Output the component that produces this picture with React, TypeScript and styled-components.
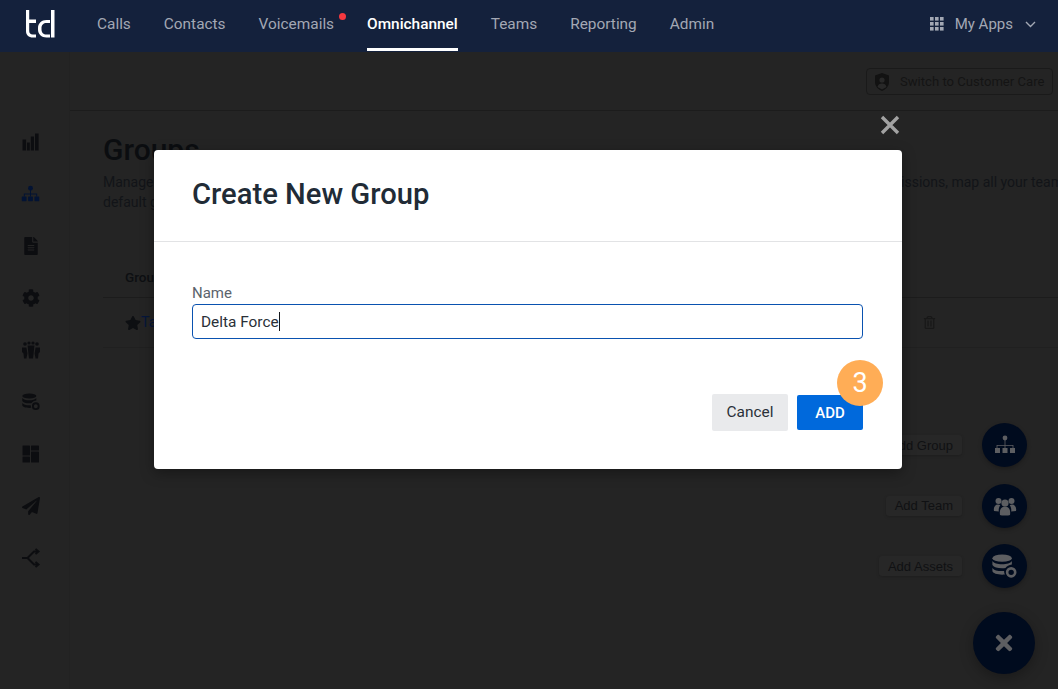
import React from "react";
import styled, { createGlobalStyle } from "styled-components";
import { FaStar, FaRegTrashAlt, FaFileAlt, FaCog, FaPaperPlane, FaTimes } from "react-icons/fa";

const Global = createGlobalStyle`
  html, body { margin: 0; padding: 0; height: 100%; background: #242424; }
  * { box-sizing: border-box; }
  body { font-family: Roboto, "Liberation Sans", sans-serif; overflow: hidden; }
`;

const Shell = styled.div`
  width: 100%;
  height: 100vh;
  display: flex;
  flex-direction: column;
  overflow: hidden;
  position: relative;
`;
const Nav = styled.header`
  height: 52px;
  flex: none;
  background: #14213c;
  display: flex;
  align-items: stretch;
  padding: 0 22px 0 26px;
`;
const Logo = styled.svg`
  width: 29px;
  height: 28px;
  margin-top: 10px;
  margin-right: 42px;
`;
const NavList = styled.nav`
  display: flex;
  gap: 33px;
`;
const NavItem = styled.a<{ $active?: boolean }>`
  position: relative;
  display: flex;
  align-items: center;
  height: 51px;
  font-size: 15.4px;
  font-weight: ${(p) => (p.$active ? 500 : 400)};
  color: ${(p) => (p.$active ? "#ffffff" : "#a3a8b4")};
  border-bottom: 3px solid ${(p) => (p.$active ? "#ffffff" : "transparent")};
`;
const Dot = styled.span`
  position: absolute;
  top: 13px;
  right: -12px;
  width: 7px;
  height: 7px;
  border-radius: 50%;
  background: #f5383f;
`;
const Apps = styled.div`
  margin-left: auto;
  display: flex;
  align-items: center;
  height: 48px;
  color: #a3a8b4;
  font-size: 15px;
`;
const AppsGrid = styled.svg`
  width: 14px;
  height: 14px;
  margin-right: 11px;
`;
const Chevron = styled.svg`
  width: 11px;
  height: 7px;
  margin-left: 12px;
`;

const Body = styled.div`
  flex: 1;
  display: flex;
  min-height: 0;
`;
const Sidebar = styled.aside`
  width: 70px;
  flex: none;
  border-right: 1px solid #222222;
  padding: 80px 8px 0 0;
  display: flex;
  flex-direction: column;
  align-items: center;
  gap: 32px;
`;
const SideIcon = styled.div<{ $active?: boolean }>`
  width: 20px;
  height: 20px;
  display: flex;
  align-items: center;
  justify-content: center;
  color: ${(p) => (p.$active ? "#031333" : "#0c0d10")};
  font-size: 18px;
`;
const Main = styled.main`
  flex: 1;
  min-width: 0;
  display: flex;
  flex-direction: column;
`;
const TopBar = styled.div`
  height: 59px;
  flex: none;
  border-bottom: 1px solid #1c1c1c;
  display: flex;
  justify-content: flex-end;
  align-items: flex-start;
  padding: 16px 5px 0 0;
`;
const SwitchBtn = styled.div`
  width: 187px;
  height: 27px;
  border: 1px solid #1a1a1a;
  border-radius: 4px;
  display: flex;
  align-items: center;
  padding-left: 7px;
  gap: 10px;
  font-size: 13.1px;
  color: #141414;
  white-space: nowrap;
`;
const Content = styled.section`
  padding: 21px 0 0 33px;
`;
const Title = styled.h1`
  margin: 0;
  font-size: 30px;
  line-height: 36px;
  font-weight: 500;
  color: #0b0d10;
`;
const Desc = styled.p`
  margin: 4px 0 0;
  font-size: 14px;
  line-height: 20px;
  color: #121418;
  white-space: nowrap;
`;
const Table = styled.div`
  margin-top: 43px;
`;
const HeadRow = styled.div`
  height: 43px;
  border-bottom: 1px solid #1c1c1c;
  padding: 1px 0 0 22px;
  display: flex;
  align-items: center;
  font-size: 13.5px;
  font-weight: 500;
  color: #0d0f12;
`;
const DataRow = styled.div`
  height: 50px;
  border-bottom: 1px solid #202020;
  padding-left: 22px;
  display: flex;
  align-items: center;
  font-size: 14.5px;
  color: #05163a;
  position: relative;
`;
const StarMark = styled.span`
  color: #0d0f12;
  font-size: 16px;
  display: flex;
`;
const RowTrash = styled.span`
  position: absolute;
  left: 820px;
  top: 18px;
  color: #181818;
  font-size: 13px;
  display: flex;
`;

const Close = styled.div`
  position: absolute;
  left: 879px;
  top: 114px;
  width: 22px;
  height: 22px;
  color: #a2a2a2;
`;
const Modal = styled.div`
  position: absolute;
  left: 154px;
  top: 150px;
  width: 748px;
  height: 319px;
  background: #fff;
  border-radius: 4px;
  box-shadow: 0 4px 14px rgba(0, 0, 0, 0.35);
  display: flex;
  flex-direction: column;
`;
const ModalHead = styled.div`
  height: 92px;
  flex: none;
  border-bottom: 1px solid #e2e3e5;
  padding: 27px 38px 0;
`;
const ModalTitle = styled.h2`
  margin: 0;
  font-size: 29.2px;
  line-height: 34px;
  font-weight: 500;
  color: #212b36;
`;
const ModalBody = styled.div`
  padding: 42px 39px 0 38px;
`;
const Label = styled.label`
  display: block;
  font-size: 15px;
  line-height: 18px;
  color: #5b636c;
  margin-bottom: 2px;
`;
const InputBox = styled.div`
  height: 35px;
  border: 1px solid #0a52b0;
  border-radius: 4px;
  display: flex;
  align-items: center;
  padding-left: 8px;
  font-size: 15.4px;
  color: #2a3038;
`;
const Caret = styled.span`
  display: inline-block;
  width: 1px;
  height: 19px;
  background: #15181c;
`;
const Actions = styled.div`
  display: flex;
  justify-content: flex-end;
  align-items: center;
  gap: 9px;
  margin-top: 55px;
  position: relative;
`;
const CancelBtn = styled.button`
  width: 76px;
  height: 37px;
  border: 0;
  border-radius: 2px;
  padding-bottom: 3px;
  background: #e9eaec;
  color: #2a3038;
  font: 400 15.4px Roboto, sans-serif;
`;
const AddBtn = styled.button`
  width: 66px;
  height: 35px;
  border: 0;
  border-radius: 2px;
  background: #0069dc;
  color: #fff;
  font: 500 15px Roboto, sans-serif;
`;
const Badge = styled.div`
  position: absolute;
  right: -20px;
  top: -34px;
  width: 46px;
  height: 46px;
  border-radius: 50%;
  background: #ffad56;
  color: #fff;
  font-size: 27px;
  display: flex;
  align-items: center;
  justify-content: center;
`;

const FabStack = styled.div`
  position: absolute;
  right: 31px;
  top: 423px;
  width: 200px;
  display: flex;
  flex-direction: column;
  align-items: flex-end;
  gap: 16.5px;
`;
const FabRow = styled.div`
  display: flex;
  align-items: center;
  gap: 20px;
  height: 44px;
`;
const FabLabel = styled.span`
  height: 20px;
  padding: 0 9px;
  display: flex;
  align-items: center;
  background: #272727;
  border-radius: 3px;
  box-shadow: 0 1px 3px rgba(0, 0, 0, 0.18);
  font-family: "Liberation Sans", Arial, sans-serif;
  font-size: 13px;
  color: #101113;
`;
const FabCircle = styled.div`
  width: 45px;
  height: 44px;
  border-radius: 50%;
  background: #000b1e;
  color: #5d5e61;
  display: flex;
  align-items: center;
  justify-content: center;
  box-shadow: 0 2px 4px rgba(0, 0, 0, 0.25);
`;
const MainFab = styled.div`
  position: absolute;
  left: 973px;
  top: 612px;
  width: 62px;
  height: 62px;
  border-radius: 50%;
  background: #000b1e;
  color: #5d5e61;
  display: flex;
  align-items: center;
  justify-content: center;
  box-shadow: 0 4px 14px rgba(0, 0, 0, 0.3);
`;

const Org = ({ size = 20 }: { size?: number }) => (
  <svg width={size} height={size} viewBox="0 0 20 20" fill="currentColor">
    <circle cx="10" cy="3.4" r="2.6" />
    <path d="M9.5 5h1v4h6.5v3h-1v-2h-5.500v2h-1v-2H4v2H3V9h6.500z" />
    <rect x="0.8" y="12" width="5" height="5" rx="0.6" />
    <rect x="7.5" y="12" width="5" height="5" rx="0.6" />
    <rect x="14.2" y="12" width="5" height="5" rx="0.6" />
  </svg>
);
const OrgThin = () => (
  <svg width="24" height="24" viewBox="0 0 24 24" fill="currentColor">
    <circle cx="12" cy="5" r="2.4" />
    <path d="M11.600 7h.8v5h8v3h-.8v-2.200h-7.200V15h-.8v-2.200H4.400V15h-.8v-3h8z" />
    <rect x="2" y="15" width="5" height="5" />
    <rect x="9.500" y="15" width="5" height="5" />
    <rect x="17" y="15" width="5" height="5" />
  </svg>
);
const Team = () => (
  <svg width="24" height="20" viewBox="0 0 24 20" fill="currentColor">
    <circle cx="5.500" cy="5" r="3" />
    <circle cx="18.500" cy="5" r="3" />
    <circle cx="12" cy="7" r="3.600" />
    <path d="M1 15c-.8-3.500 1-6.500 4-6.500 1 0 1.700.3 2.300.7C6 11 5.500 13 5.800 15.500zM23 15c.8-3.500-1-6.500-4-6.500-1 0-1.700.3-2.300.7 1.300 1.800 1.800 3.800 1.500 6.300z" />
    <path d="M7 19c-.8-5 1-8.500 5-8.500s5.800 3.500 5 8.500c-1.500.8-8.500.8-10 0z" />
  </svg>
);
const Bars = () => (
  <svg width="18" height="18" viewBox="0 0 18 18" fill="currentColor">
    <rect x="0.5" y="6.500" width="3.600" height="11" />
    <rect x="5" y="9.500" width="2.800" height="8" />
    <rect x="8.800" y="3.500" width="3.200" height="14" />
    <rect x="13" y="0.500" width="3.600" height="17" />
  </svg>
);
const People = () => (
  <svg width="18" height="18" viewBox="0 0 18 18" fill="currentColor">
    <circle cx="3" cy="3" r="1.800" /><circle cx="7" cy="2" r="1.600" /><circle cx="11" cy="2" r="1.600" /><circle cx="15" cy="3" r="1.800" />
    <path d="M0 6.500h4.400l1 6-1 5H2l-.5-5L0 11zM13.600 6.500H18V11l-1.500 1.500-.5 5h-2.400l-1-5zM5.600 4.500h6.800l-.8 8-.6 5H7l-.6-5z" />
  </svg>
);
const Db = ({ size = 18 }: { size?: number }) => (
  <svg width={size} height={size} viewBox="0 0 18 18" fill="currentColor">
    <ellipse cx="7.300" cy="3" rx="7" ry="2.600" />
    <path d="M.3 5c1 1.700 3.600 2.300 7 2.300s6-.6 7-2.300v2.600c-2 .2-3.800 1.200-4.600 2.400-.8.200-1.600.2-2.400.2-3.400 0-6-.7-7-2.300z" />
    <path d="M.3 10c1 1.600 3.600 2.300 7 2.300h1.400c0 1 .2 1.800.6 2.500-.6.100-1.300.1-2 .1-3.400 0-7-1-7-2.600z" />
    <circle cx="13.800" cy="13.200" r="2.900" fill="none" stroke="currentColor" strokeWidth="1.900" />
  </svg>
);
const Dash = () => (
  <svg width="18" height="18" viewBox="0 0 18 18" fill="currentColor">
    <rect x="0.5" y="0.5" width="7.500" height="10" rx="0.6" />
    <rect x="0.5" y="11.500" width="7.500" height="6" rx="0.6" />
    <rect x="9" y="0.5" width="8" height="5" rx="0.6" />
    <rect x="9" y="6.500" width="8" height="11" rx="0.6" />
  </svg>
);
const Split = () => (
  <svg width="20" height="20" viewBox="0 0 20 20" fill="none" stroke="currentColor" strokeWidth="2">
    <path d="M1 10h5.500L13 3.500h4M6.500 10l6.500 6.500h4" />
    <path d="M14.500 1l3 2.500-3 2.500M14.500 14l3 2.500-3 2.500" />
  </svg>
);
const Shield = () => (
  <svg width="16" height="18" viewBox="0 0 16 18" fill="#121212">
    <path d="M8 0l7 2.500V9c0 4-3 7.500-7 9-4-1.500-7-5-7-9V2.500z" />
    <circle cx="8" cy="7" r="2.600" fill="#282828" />
    <path d="M3.500 14c.5-2.500 2.300-3.500 4.500-3.500s4 1 4.500 3.500L8 16.500z" fill="#282828" />
  </svg>
);

const navItems = ["Calls", "Contacts", "Voicemails", "Omnichannel", "Teams", "Reporting", "Admin"];

export default function App() {
  return (
    <Shell>
      <Global />
      <Nav>
        <Logo viewBox="0 0 29 28" fill="#ffffff">
          <path d="M0 0h3.200v9.500H10V13H3.200v8c0 2 1.300 3.500 3.500 3.500H10v3H7c-4.500 0-7-2.500-7-6.500z" />
          <path d="M25 0h3.500v27.500H25zM24 10v3h-3.500c-3 0-5 2-5 5v1.500c0 3 2 5 5 5H24v3h-3.500c-5 0-8.500-3.300-8.500-8V18c0-4.700 3.500-8 8.500-8z" />
        </Logo>
        <NavList>
          {navItems.map((n) => (
            <NavItem key={n} $active={n === "Omnichannel"}>
              {n}
              {n === "Voicemails" && <Dot />}
            </NavItem>
          ))}
        </NavList>
        <Apps>
          <AppsGrid viewBox="0 0 14 14" fill="currentColor">
            {[0, 5, 10].flatMap((y) =>
              [0, 5, 10].map((x) => <rect key={`${x}-${y}`} x={x} y={y} width="3.600" height="3.600" />)
            )}
          </AppsGrid>
          My Apps
          <Chevron viewBox="0 0 11 7" fill="none" stroke="currentColor" strokeWidth="1.400">
            <path d="M1 1l4.500 4.500L10 1" />
          </Chevron>
        </Apps>
      </Nav>
      <Body>
        <Sidebar>
          <SideIcon><Bars /></SideIcon>
          <SideIcon $active><Org size={19} /></SideIcon>
          <SideIcon><FaFileAlt /></SideIcon>
          <SideIcon><FaCog /></SideIcon>
          <SideIcon><People /></SideIcon>
          <SideIcon><Db /></SideIcon>
          <SideIcon><Dash /></SideIcon>
          <SideIcon><FaPaperPlane /></SideIcon>
          <SideIcon><Split /></SideIcon>
        </Sidebar>
        <Main>
          <TopBar>
            <SwitchBtn><Shield />Switch to Customer Care</SwitchBtn>
          </TopBar>
          <Content>
            <Title>Groups</Title>
            <Desc>
              Manage the groups here. Create new groups to organize your users and teams, assign their roles and set up the group-wide permissions, map all your teams
              <br />
              default group
            </Desc>
            <Table>
              <HeadRow>Group Name</HeadRow>
              <DataRow>
                <StarMark><FaStar /></StarMark>Tango
                <RowTrash><FaRegTrashAlt /></RowTrash>
              </DataRow>
            </Table>
          </Content>
        </Main>
      </Body>

      <FabStack>
        <FabRow><FabLabel>Add Group</FabLabel><FabCircle><OrgThin /></FabCircle></FabRow>
        <FabRow><FabLabel>Add Team</FabLabel><FabCircle><Team /></FabCircle></FabRow>
        <FabRow><FabLabel>Add Assets</FabLabel><FabCircle><Db size={25} /></FabCircle></FabRow>
      </FabStack>
      <MainFab><FaTimes size={24} /></MainFab>

      <Close>
        <svg width="22" height="22" viewBox="0 0 22 22" stroke="currentColor" strokeWidth="3.400">
          <path d="M3 3l16 16M19 3L3 19" />
        </svg>
      </Close>
      <Modal>
        <ModalHead>
          <ModalTitle>Create New Group</ModalTitle>
        </ModalHead>
        <ModalBody>
          <Label>Name</Label>
          <InputBox>Delta Force<Caret /></InputBox>
          <Actions>
            <CancelBtn>Cancel</CancelBtn>
            <AddBtn>ADD</AddBtn>
            <Badge>3</Badge>
          </Actions>
        </ModalBody>
      </Modal>
    </Shell>
  );
}
